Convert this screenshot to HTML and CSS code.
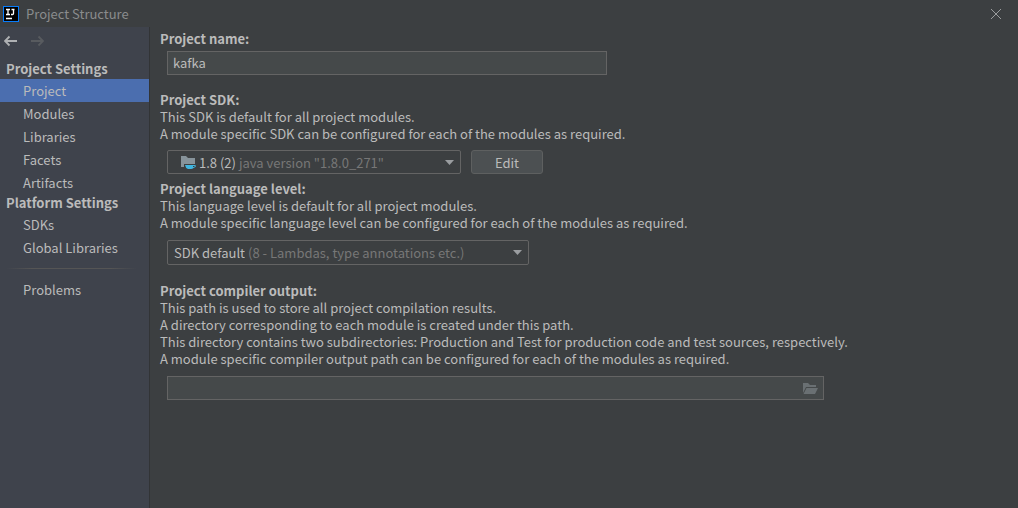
FILE: index.html
```html
<!DOCTYPE html>
<html lang="en">
<head>
    <meta charset="UTF-8">
    <meta name="viewport" content="width=device-width, initial-scale=1.0">
    <title>Project Structure</title>
    <link rel="stylesheet" href="styles.css">
</head>
<body>
    <header class="title-bar">
        <svg class="app-logo" width="16" height="16" viewBox="0 0 16 16">
            <rect width="16" height="16" fill="#087cfa"/>
            <rect x="1" y="1" width="14" height="14" fill="#000"/>
            <path d="M3 3.500h4M5 3v6M3 8.500h4M8.500 3.500h3M10.500 3v4.500q0 1-1 1h-1.500M3 12.500h6" fill="none" stroke="#fff" stroke-width="1.300"/>
        </svg>
        <h1 class="window-title">Project Structure</h1>
        <button type="button" class="close-btn" aria-label="Close">
            <svg width="12" height="12" viewBox="0 0 12 12"><path d="M1 1l10 10M11 1L1 11" stroke="#9a9c9d" stroke-width="1"/></svg>
        </button>
    </header>
    <div class="window-body">
        <aside class="sidebar">
            <div class="history">
                <button type="button" class="history-btn" aria-label="Back">
                    <svg width="14" height="12" viewBox="0 0 14 12"><path d="M1 6h12M5.500 1.500L1 6l4.500 4.500" fill="none" stroke="#afb1b3" stroke-width="1.800"/></svg>
                </button>
                <button type="button" class="history-btn" aria-label="Forward" disabled>
                    <svg width="14" height="12" viewBox="0 0 14 12"><path d="M1 6h12M8.500 1.500L13 6l-4.500 4.500" fill="none" stroke="#585b5f" stroke-width="1.800"/></svg>
                </button>
            </div>
            <nav>
                <h2 class="nav-title">Project Settings</h2>
                <a href="#" class="nav-item active">Project</a>
                <a href="#" class="nav-item">Modules</a>
                <a href="#" class="nav-item">Libraries</a>
                <a href="#" class="nav-item">Facets</a>
                <a href="#" class="nav-item">Artifacts</a>
                <h2 class="nav-title">Platform Settings</h2>
                <a href="#" class="nav-item">SDKs</a>
                <a href="#" class="nav-item">Global Libraries</a>
                <hr class="separator">
                <a href="#" class="nav-item">Problems</a>
            </nav>
        </aside>
        <main class="content">
            <section class="form-group name-group">
                <label class="form-title" for="name">Project name:</label>
                <input class="text-field" type="text" id="name" name="name" value="kafka">
            </section>
            <section class="form-group sdk-group">
                <label class="form-title" for="sdk">Project SDK:</label>
                <p>This SDK is default for all project modules.</p>
                <p>A module specific SDK can be configured for each of the modules as required.</p>
                <div class="field-row">
                    <label class="combo sdk-combo">
                        <svg class="sdk-icon" width="16" height="16" viewBox="0 0 16 16">
                            <path d="M1 2h5l2 2h7v6H4v3H1z" fill="#87939a"/>
                            <path d="M5 11h9q2 0 2 1t-2.500 2q-1 1-2.500 1H8q-2.500-1-3-4z" fill="#40b6e0"/>
                            <path d="M13 12h1.500v1H13z" fill="#3c3f41"/>
                        </svg>
                        <select id="sdk" name="sdk">
                            <option>1.8 (2)</option>
                        </select>
                        <span class="hint">java version "1.8.0_271"</span>
                        <svg class="arrow" width="9" height="5" viewBox="0 0 9 5"><path d="M0 0h9L4.500 5z" fill="#9a9da0"/></svg>
                    </label>
                    <button type="button" class="edit-btn">Edit</button>
                </div>
            </section>
            <section class="form-group level-group">
                <label class="form-title" for="level">Project language level:</label>
                <p>This language level is default for all project modules.</p>
                <p>A module specific language level can be configured for each of the modules as required.</p>
                <label class="combo level-combo">
                    <select id="level" name="level">
                        <option>SDK default</option>
                    </select>
                    <span class="hint">(8 - Lambdas, type annotations etc.)</span>
                    <svg class="arrow" width="9" height="5" viewBox="0 0 9 5"><path d="M0 0h9L4.500 5z" fill="#9a9da0"/></svg>
                </label>
            </section>
            <section class="form-group output-group">
                <label class="form-title" for="output">Project compiler output:</label>
                <p>This path is used to store all project compilation results.</p>
                <p>A directory corresponding to each module is created under this path.</p>
                <p>This directory contains two subdirectories: Production and Test for production code and test sources, respectively.</p>
                <p>A module specific compiler output path can be configured for each of the modules as required.</p>
                <div class="path-field">
                    <input type="text" id="output" name="output">
                    <button type="button" class="browse-btn" aria-label="Browse">
                        <svg width="15" height="11" viewBox="0 0 15 11"><path d="M0 10V0h5l2 2h6v2H3zM3.500 5H15l-3 6H.500z" fill="#6a7073"/></svg>
                    </button>
                </div>
            </section>
        </main>
    </div>
</body>
</html>
```
FILE: styles.css
```css
* {
    box-sizing: border-box;
}
body {
    margin: 0;
    min-height: 100vh;
    display: flex;
    flex-direction: column;
    background-color: #3c3f41;
    color: #bbbbbb;
    font-family: "Noto Sans CJK SC", "Noto Sans", sans-serif;
    font-size: 13px;
    line-height: 17px;
}
h1, h2, p {
    margin: 0;
    font-size: 13px;
}
button, input, select {
    font: inherit;
    color: inherit;
}
.title-bar {
    display: flex;
    align-items: center;
    height: 27px;
    padding: 0 16px 0 3px;
}
.window-title {
    flex: 1;
    margin-left: 7px;
    font-weight: normal;
    color: #8a8c8d;
}
.close-btn, .history-btn, .browse-btn {
    display: flex;
    padding: 0;
    border: none;
    background: none;
}
.window-body {
    flex: 1;
    display: flex;
}
.sidebar {
    width: 150px;
    flex-shrink: 0;
    background-color: #3f434c;
    border-right: 1px solid #323436;
}
.history {
    display: flex;
    gap: 12px;
    height: 33px;
    padding: 8px 4px;
}
.nav-title {
    padding: 0 6px 2px;
}
.nav-item {
    display: block;
    padding: 3px 23px;
    color: #bbbbbb;
    text-decoration: none;
}
.nav-item.active {
    background-color: #4b6eaf;
}
.separator {
    height: 1px;
    margin: 9px 12px 9px 6px;
    border: none;
    background: linear-gradient(to right, transparent, #555555 20%, #555555 80%, transparent);
}
.content {
    flex: 1;
    padding: 3px 10px;
}
.form-title {
    display: block;
    font-weight: bold;
}
.name-group {
    margin-bottom: 16px;
}
.sdk-group {
    margin-bottom: 6px;
}
.level-group {
    margin-bottom: 17px;
}
.text-field {
    display: block;
    width: 440px;
    max-width: 100%;
    height: 24px;
    margin: 4px 7px 0;
    padding: 0 5px 2px;
    border: 1px solid #646464;
    background-color: #45494a;
}
.field-row {
    display: flex;
    gap: 10px;
    margin: 8px 7px 0;
}
.combo {
    display: flex;
    align-items: center;
    height: 24px;
    padding: 0 6px;
    border: 1px solid #646464;
    border-radius: 2px;
}
.combo select {
    appearance: none;
    field-sizing: content;
    padding: 0;
    border: none;
    background: none;
}
.sdk-combo {
    width: 294px;
}
.level-combo {
    width: 362px;
    height: 25px;
    margin: 9px 7px 0;
}
.sdk-icon {
    margin: 0 3px 0 6px;
}
.hint {
    margin-left: 3px;
    color: #777777;
}
.arrow {
    margin-left: auto;
}
.edit-btn {
    width: 72px;
    border: 1px solid #5e6060;
    border-radius: 3px;
    background-color: #4c5052;
}
.path-field {
    display: flex;
    align-items: center;
    width: 657px;
    max-width: 100%;
    height: 24px;
    margin: 9px 7px 0;
    padding: 0 5px;
    border: 1px solid #646464;
    background-color: #45494a;
}
.path-field input {
    flex: 1;
    padding: 0;
    border: none;
    background: none;
}
```
